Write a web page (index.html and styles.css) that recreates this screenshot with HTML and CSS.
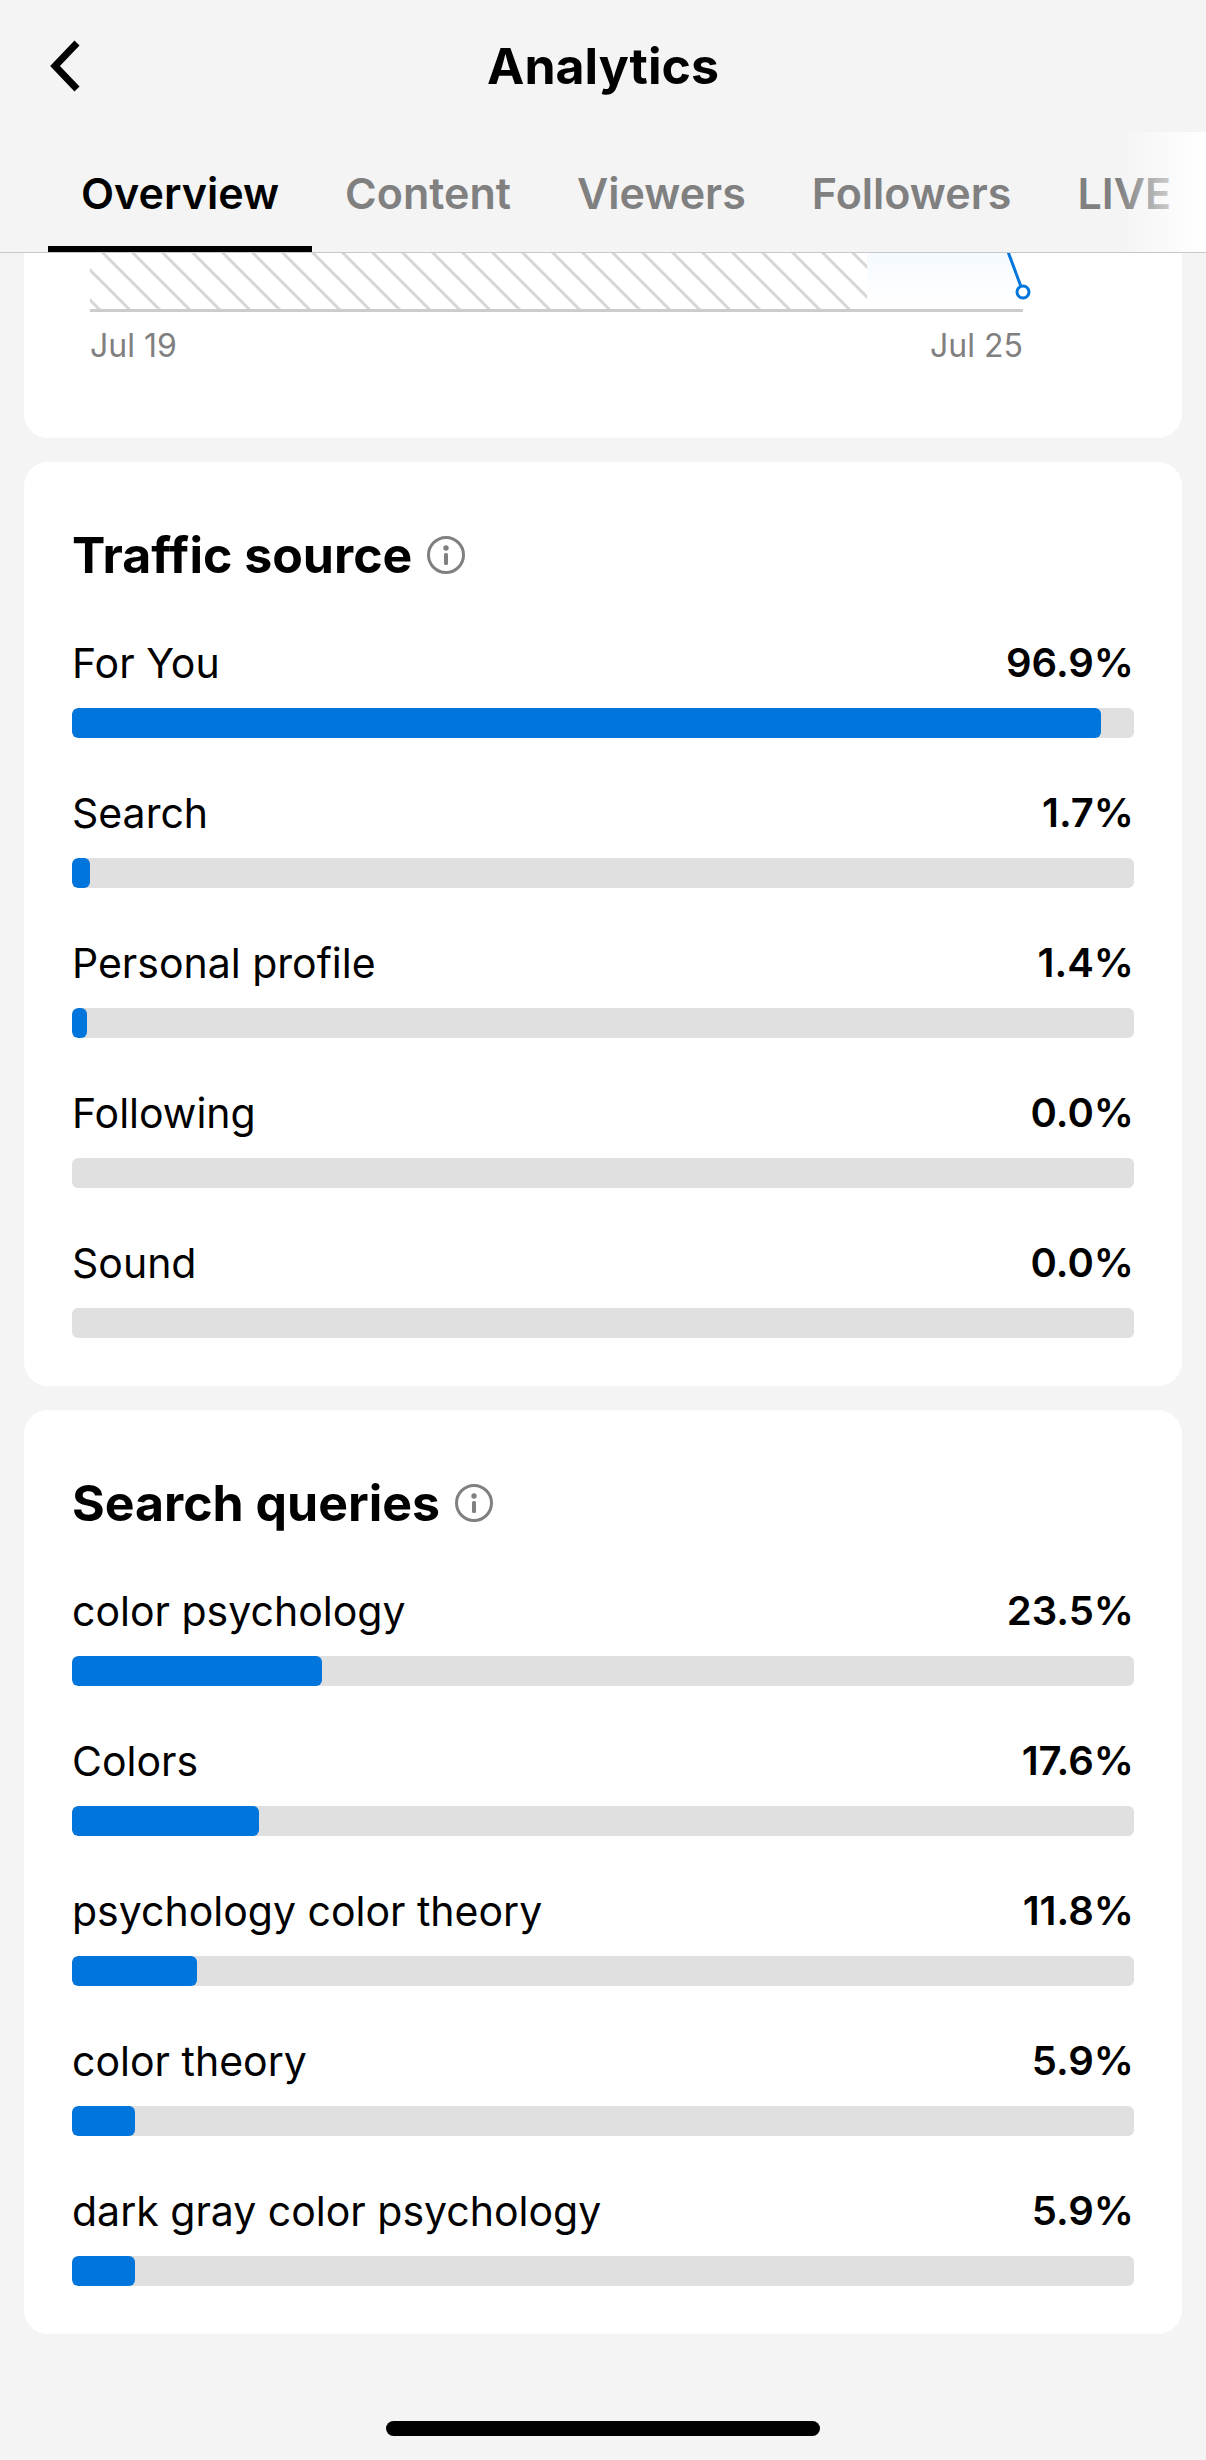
FILE: index.html
```html
<!DOCTYPE html>
<html lang="en">
<head>
  <meta charset="UTF-8" />
  <meta name="viewport" content="width=device-width, initial-scale=1" />
  <title>Analytics</title>
  <link rel="stylesheet" href="styles.css">
</head>
<body>
  <!-- Header -->
  <header class="header">
    <div class="title-bar">
      <button class="back" type="button" aria-label="Back">
        <svg width="36" height="60" viewBox="0 0 36 60" fill="none" stroke="currentColor" stroke-width="7">
          <path d="M31 7 9 30l22 23" />
        </svg>
      </button>
      <h1>Analytics</h1>
    </div>
    <nav class="tabs">
      <a class="tab active" href="#overview">Overview</a>
      <a class="tab" href="#content">Content</a>
      <a class="tab" href="#viewers">Viewers</a>
      <a class="tab" href="#followers">Followers</a>
      <a class="tab" href="#live">LIVE</a>
    </nav>
  </header>

  <main class="cards" id="overview">
    <!-- Bottom of the 7 day chart -->
    <section class="card chart-card">
      <div class="chart">
        <svg class="plot" viewBox="0 0 933 59" aria-hidden="true">
          <defs>
            <pattern id="hatch" width="30" height="30" patternUnits="userSpaceOnUse" patternTransform="translate(9 26)">
              <path d="M-5 -5 35 35M-5 25 5 35M25 -5 35 5" stroke="#d6d6d6" stroke-width="3" />
            </pattern>
            <linearGradient id="area" x1="0" y1="0" x2="0" y2="1">
              <stop offset="0" stop-color="#f5faff" />
              <stop offset="1" stop-color="#ffffff" />
            </linearGradient>
          </defs>
          <rect width="777" height="56" fill="url(#hatch)" />
          <path d="M777 0h142l14 52H777z" fill="url(#area)" />
          <rect y="56" width="933" height="3" fill="#cccccc" />
          <path d="M917-4 933 39" stroke="#0075dc" stroke-width="3" />
          <circle cx="933" cy="39" r="6" fill="#ffffff" stroke="#0075dc" stroke-width="3" />
        </svg>
        <div class="dates">
          <span>Jul 19</span>
          <span>Jul 25</span>
        </div>
      </div>
    </section>

    <!-- Traffic source -->
    <section class="card">
      <div class="card-title">
        <h2>Traffic source</h2>
        <button class="info" type="button" aria-label="About traffic source">
          <svg width="40" height="40" viewBox="0 0 40 40">
            <circle cx="20" cy="20" r="17.5" fill="none" stroke="currentColor" stroke-width="3" />
            <circle cx="20" cy="13" r="2.7" fill="currentColor" />
            <rect x="18" y="18" width="4" height="12" rx="1.5" fill="currentColor" />
          </svg>
        </button>
      </div>
      <ul class="stats">
        <li>
          <div class="stat"><span>For You</span><strong>96.9%</strong></div>
          <div class="bar"><div class="fill" style="width: 96.9%"></div></div>
        </li>
        <li>
          <div class="stat"><span>Search</span><strong>1.7%</strong></div>
          <div class="bar"><div class="fill" style="width: 1.7%"></div></div>
        </li>
        <li>
          <div class="stat"><span>Personal profile</span><strong>1.4%</strong></div>
          <div class="bar"><div class="fill" style="width: 1.4%"></div></div>
        </li>
        <li>
          <div class="stat"><span>Following</span><strong>0.0%</strong></div>
          <div class="bar"><div class="fill" style="width: 0%"></div></div>
        </li>
        <li>
          <div class="stat"><span>Sound</span><strong>0.0%</strong></div>
          <div class="bar"><div class="fill" style="width: 0%"></div></div>
        </li>
      </ul>
    </section>

    <!-- Search queries -->
    <section class="card">
      <div class="card-title">
        <h2>Search queries</h2>
        <button class="info" type="button" aria-label="About search queries">
          <svg width="40" height="40" viewBox="0 0 40 40">
            <circle cx="20" cy="20" r="17.5" fill="none" stroke="currentColor" stroke-width="3" />
            <circle cx="20" cy="13" r="2.7" fill="currentColor" />
            <rect x="18" y="18" width="4" height="12" rx="1.5" fill="currentColor" />
          </svg>
        </button>
      </div>
      <ul class="stats">
        <li>
          <div class="stat"><span>color psychology</span><strong>23.5%</strong></div>
          <div class="bar"><div class="fill" style="width: 23.5%"></div></div>
        </li>
        <li>
          <div class="stat"><span>Colors</span><strong>17.6%</strong></div>
          <div class="bar"><div class="fill" style="width: 17.6%"></div></div>
        </li>
        <li>
          <div class="stat"><span>psychology color theory</span><strong>11.8%</strong></div>
          <div class="bar"><div class="fill" style="width: 11.8%"></div></div>
        </li>
        <li>
          <div class="stat"><span>color theory</span><strong>5.9%</strong></div>
          <div class="bar"><div class="fill" style="width: 5.9%"></div></div>
        </li>
        <li>
          <div class="stat"><span>dark gray color psychology</span><strong>5.9%</strong></div>
          <div class="bar"><div class="fill" style="width: 5.9%"></div></div>
        </li>
      </ul>
    </section>
  </main>

  <!-- Home indicator -->
  <footer class="home">
    <div class="home-bar"></div>
  </footer>
</body>
</html>
```
FILE: styles.css
```css
:root {
  --page-bg: #f4f4f4;
  --text-color: #000;
  --muted-color: #808080;
  --accent-color: #0075dc;
  --track-color: #e0e0e0;
}

* {
  box-sizing: border-box;
}

body {
  min-height: 100vh;
  margin: 0;
  display: flex;
  flex-direction: column;
  background: var(--page-bg);
  color: var(--text-color);
  font-family: Inter, "Liberation Sans", sans-serif;
}

h1, h2, ul {
  margin: 0;
  padding: 0;
}

button {
  padding: 0;
  border: 0;
  background: none;
  color: inherit;
  cursor: pointer;
}

svg {
  display: block;
}

/* Header stays above the scrolled chart */
.header {
  position: sticky;
  top: 0;
  z-index: 1;
  border-bottom: 1px solid #c8c8c8;
  background: var(--page-bg);
}

.title-bar {
  height: 132px;
  padding: 0 46px;
  display: grid;
  grid-template-columns: 1fr auto 1fr;
  align-items: center;
}

.back {
  justify-self: start;
}

.title-bar h1 {
  font-size: 50px;
  line-height: 60px;
  font-weight: 700;
}

/* Tabs */
.tabs {
  position: relative;
  height: 120px;
  padding: 0 48px;
  display: flex;
  overflow: hidden;
}

/* Fade over the last tab */
.tabs::after {
  content: "";
  position: absolute;
  top: 0;
  right: 0;
  width: 88px;
  height: 100%;
  background: linear-gradient(to right, rgba(255, 255, 255, 0), #fff);
}

.tab {
  padding: 0 33px;
  border-bottom: 6px solid transparent;
  color: var(--muted-color);
  font-size: 43px;
  font-weight: 600;
  line-height: 122px;
  text-decoration: none;
  white-space: nowrap;
}

.tab.active {
  border-color: var(--text-color);
  color: var(--text-color);
}

/* Cards */
.cards {
  padding: 0 24px;
  display: flex;
  flex-direction: column;
  gap: 24px;
}

.card {
  padding: 66px 48px 48px;
  border-radius: 24px;
  background: #fff;
}

.card-title {
  height: 54px;
  margin-bottom: 54px;
  display: flex;
  align-items: center;
  gap: 14px;
}

.card-title h2 {
  font-size: 50px;
  line-height: 54px;
  font-weight: 700;
}

.info {
  color: var(--muted-color);
}

/* Chart */
.chart-card {
  padding: 0 159px 68px 66px;
  border-top-left-radius: 0;
  border-top-right-radius: 0;
}

.plot {
  width: 100%;
  overflow: visible;
}

.dates {
  padding-top: 10px;
  display: flex;
  justify-content: space-between;
  color: var(--muted-color);
  font-size: 32px;
  line-height: 48px;
}

/* Stats with progress bars */
.stats {
  display: flex;
  flex-direction: column;
  gap: 48px;
  list-style: none;
}

.stat {
  height: 72px;
  display: flex;
  justify-content: space-between;
  font-size: 41px;
  line-height: 54px;
}

.stat strong {
  font-size: 40px;
  font-weight: 600;
}

.bar {
  height: 30px;
  border-radius: 6px;
  background: var(--track-color);
  overflow: hidden;
}

.fill {
  height: 100%;
  border-radius: 6px;
  background: var(--accent-color);
}

/* Home indicator */
.home {
  margin-top: auto;
  padding: 48px 0 24px;
}

.home-bar {
  width: 36%;
  height: 15px;
  margin: 0 auto;
  border-radius: 8px;
  background: #000;
}
```
